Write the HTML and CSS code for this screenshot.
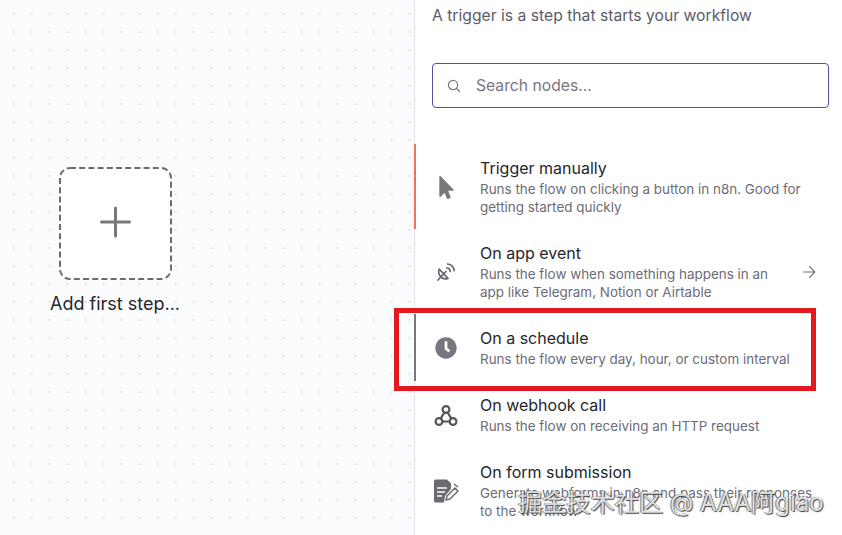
FILE: index.html
```html
<!DOCTYPE html>
<html>
<head>
<meta name="viewport" content="width=device-width, initial-scale=1">
<link rel="stylesheet" href="styles.css">
</head>
<body>

<div class="canvas">
	<div class="add-node">
		<svg class="add-box" width="114" height="114" viewBox="0 0 114 114">
			<rect x="2" y="1" width="111" height="111" rx="10" fill="#fff" stroke="#6b6b72" stroke-width="2" stroke-dasharray="6 3.2"/>
			<path d="M57.500 41v28M43.500 55h28" stroke="#77777c" stroke-width="3" stroke-linecap="round" fill="none"/>
		</svg>
		<div class="add-label">Add first step...</div>
	</div>
</div>

<div class="panel">
	<p class="intro">A trigger is a step that starts your workflow</p>

	<div class="search">
		<svg width="14" height="14" viewBox="0 0 14 14" fill="none" stroke="#77777f" stroke-width="1.2" stroke-linecap="round">
			<circle cx="6" cy="6" r="4.6"/>
			<path d="M9.5 9.5l3 3"/>
		</svg>
		<span class="placeholder">Search nodes...</span>
	</div>

	<ul class="nodes">
		<li class="node active">
			<div class="node-icon">
				<svg width="15" height="23" viewBox="0 0 320 512"><path fill="#77777f" d="M302.189 329.126H196.105l55.831 135.993c3.889 9.428-.555 19.999-9.444 23.999l-49.165 21.427c-9.165 4-19.443-.571-23.332-9.714l-53.053-129.136-86.664 89.138C18.729 472.71 0 463.554 0 447.977V18.299C0 1.899 19.921-6.096 30.277 5.443l284.412 292.542c11.472 11.179 3.007 31.141-12.5 31.141z"/></svg>
			</div>
			<div class="node-text">
				<div class="node-title">Trigger manually</div>
				<div class="node-desc">Runs the flow on clicking a button in n8n. Good for getting started quickly</div>
			</div>
		</li>
		<li class="node">
			<div class="node-icon">
				<svg width="20" height="20" viewBox="0 0 20 20" fill="none" stroke="#66666e" stroke-width="1.7" stroke-linecap="round" stroke-linejoin="round">
					<path d="M3.200 7.200a7 7 0 0 0 8.800 9.200z"/>
					<path d="M2 18l5.500-6M7.500 12l2.500-2.500"/>
					<path d="M10.800 6a3.500 3.500 0 0 1 3.400 3.400M11.600 2a7 7 0 0 1 6.600 6.600"/>
				</svg>
			</div>
			<div class="node-text">
				<div class="node-title">On app event</div>
				<div class="node-desc">Runs the flow when something happens in an app like Telegram, Notion or Airtable</div>
			</div>
			<svg class="node-arrow" width="14" height="14" viewBox="0 0 14 14" fill="none" stroke="#77777f" stroke-width="1.1" stroke-linecap="round" stroke-linejoin="round">
				<path d="M1.500 7h11M7.500 1.500L12.800 7l-5.300 5.500"/>
			</svg>
		</li>
		<li class="node hovered">
			<div class="node-icon">
				<svg width="22" height="22" viewBox="0 0 512 512"><path fill="#77777f" d="M256,8C119,8,8,119,8,256S119,504,256,504,504,393,504,256,393,8,256,8Zm92.49,313h0l-20,25a16,16,0,0,1-22.49,2.5h0l-67-49.72a40,40,0,0,1-15-31.23V112a16,16,0,0,1,16-16h32a16,16,0,0,1,16,16V256l58,42.5A16,16,0,0,1,348.49,321Z"/></svg>
			</div>
			<div class="node-text">
				<div class="node-title">On a schedule</div>
				<div class="node-desc">Runs the flow every day, hour, or custom interval</div>
			</div>
		</li>
		<li class="node">
			<div class="node-icon">
				<svg width="24" height="23" viewBox="0 0 24 23" fill="none" stroke="#55555c" stroke-width="2.200" stroke-linecap="round">
					<circle cx="12" cy="5.500" r="3.400"/>
					<circle cx="5" cy="17.500" r="3.400"/>
					<circle cx="19" cy="17.500" r="3.400"/>
					<path d="M10.300 8.500L6.700 14.600M8.400 17.500h7.200M13.700 8.500l3.600 6.100"/>
				</svg>
			</div>
			<div class="node-text">
				<div class="node-title">On webhook call</div>
				<div class="node-desc">Runs the flow on receiving an HTTP request</div>
			</div>
		</li>
		<li class="node">
			<div class="node-icon">
				<svg width="26" height="24" viewBox="0 0 26 24">
					<path fill="#6b6b73" d="M1 2a1.500 1.500 0 0 1 1.500-1.500H14l4 4v5.500l-6 7-1 6.500H2.500A1.500 1.500 0 0 1 1 22z"/>
					<path d="M4 9h10M4 13h8M4 17h5" stroke="#fff" stroke-width="1.600" fill="none"/>
					<path d="M13 21l1-4 8-8 3 3-8 8zM21 5l4 3" stroke="#6b6b73" stroke-width="1.500" fill="none" stroke-linejoin="round"/>
				</svg>
			</div>
			<div class="node-text">
				<div class="node-title">On form submission</div>
				<div class="node-desc">Generate webforms in n8n and pass their responses to the workflow</div>
			</div>
		</li>
	</ul>
</div>

<!-- red annotation drawn on top of the screenshot -->
<div class="highlight"></div>
<div class="watermark">掘金技术社区 @ AAA阿giao</div>

</body>
</html>
```

FILE: styles.css
```css
* {
  box-sizing: border-box;
}

html, body {
  height: 100%;
}

body {
  margin: 0;
  display: flex;
  position: relative;
  overflow: hidden;
  background: #fff;
  font-family: Inter, "Noto Sans CJK SC", sans-serif;
}

/* Dotted workflow canvas */
.canvas {
  width: 414px;
  flex-shrink: 0;
  padding: 167px 0 0 58px;
  background-color: #fbfcfe;
  background-image: radial-gradient(circle, #d3d5db 0.6px, transparent 0.9px);
  background-size: 18px 18px;
  background-position: 4.500px 5px;
}

.add-node {
  width: 114px;
}

.add-box {
  display: block;
}

.add-label {
  margin: 13px -20px 0;
  text-align: center;
  font-size: 18px;
  line-height: 20px;
  color: #26262b;
  white-space: nowrap;
}

/* Side panel */
.panel {
  flex: 1;
  border-left: 1px solid #dfe3ec;
  background: #fff;
}

.intro {
  margin: 0;
  padding: 6px 0 0 17px;
  font-size: 15.700px;
  line-height: 20px;
  color: #5c5c66;
}

.search {
  display: flex;
  align-items: center;
  gap: 15px;
  width: 397px;
  height: 45px;
  margin: 37px 0 0 17px;
  padding-left: 14px;
  border: 1px solid #5b4a9e;
  border-radius: 4px;
}

.placeholder {
  font-size: 15.700px;
  color: #77777f;
}

.nodes {
  margin: 36px 0 0;
  padding: 0;
  list-style: none;
}

.node {
  display: flex;
  align-items: center;
  gap: 20px;
  padding: 14px 26px 13px 19px;
  border-left: 2px solid transparent;
  margin-left: -1px;
}

.node.active {
  border-left-color: #f0705c;
}

.node.hovered {
  border-left-color: #77777f;
}

.node-icon {
  width: 28px;
  margin: 0 0 0 -3px;
  flex-shrink: 0;
  display: flex;
  justify-content: center;
}

.node-icon svg {
  flex-shrink: 0;
}

.node-text {
  flex: 1;
}

.node-title {
  font-size: 16px;
  line-height: 20px;
  color: #26262b;
}

.node-desc {
  margin-top: 2px;
  font-size: 13.450px;
  line-height: 18px;
  color: #6c6c75;
}

.node-arrow {
  flex-shrink: 0;
}

/* Annotation and watermark over the page */
.highlight {
  position: absolute;
  left: 394px;
  top: 308px;
  width: 422px;
  height: 83px;
  border: 5px solid #e2191f;
}

.watermark {
  position: absolute;
  left: 518px;
  top: 488px;
  font-size: 24.200px;
  line-height: 30px;
  white-space: nowrap;
  color: rgba(255, 255, 255, 0.8);
  text-shadow: 1px 1px 1px #444, -1px 0 1px #777;
}
```
